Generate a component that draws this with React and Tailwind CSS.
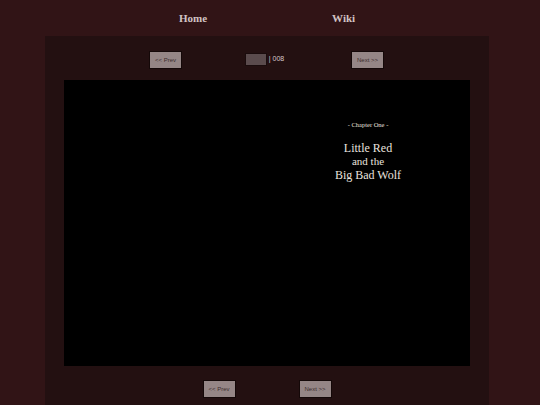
const serif = { fontFamily: '"Liberation Serif", "Times New Roman", serif' }

function PageButton({ children }) {
  return (
    <button
      className="w-[33px] h-[18px] flex items-center justify-center border border-[#140808] bg-[#958686] text-[#3b2c2c] text-[6px] leading-none"
      style={{ fontFamily: '"Liberation Sans", Arial, sans-serif' }}
    >
      {children}
    </button>
  )
}

export default function App() {
  return (
    <div className="w-[540px] h-[405px] overflow-hidden bg-[#311416] flex flex-col">
      <nav className="h-[36px] flex items-center text-[11px] font-bold text-[#d2c3c3]" style={serif}>
        <span className="ml-[179px]">Home</span>
        <span className="ml-[125px]">Wiki</span>
      </nav>

      <main className="mx-[45px] w-[444px] flex-1 bg-[#231011] flex flex-col">
        <div className="h-[44px] flex items-center justify-between pl-[104px] pr-[105px] pt-[3px]">
          <PageButton>&lt;&lt; Prev</PageButton>
          <div className="flex items-center gap-[2px] text-[7px] text-[#d6c9c9] -ml-[4px]" style={{ fontFamily: '"Liberation Sans", Arial, sans-serif' }}>
            <div className="w-[22px] h-[13px] bg-[#5a4b4d] border border-[#1a0c0d]" />
            <span>| 008</span>
          </div>
          <PageButton>Next &gt;&gt;</PageButton>
        </div>

        <div className="mx-[19px] h-[286px] bg-black flex">
          <div className="ml-[243px] w-[122px] pt-[42px] flex flex-col items-center text-[#e9e2df]" style={serif}>
            <p className="text-[6.5px] leading-none">- Chapter One -</p>
            <p className="mt-[13px] text-[12px] leading-[13px]">Little Red</p>
            <p className="text-[11px] leading-[13px]">and the</p>
            <p className="text-[12px] leading-[14px]">Big Bad Wolf</p>
          </div>
        </div>

        <div className="pt-[14px] flex justify-center gap-[63px]">
          <PageButton>&lt;&lt; Prev</PageButton>
          <PageButton>Next &gt;&gt;</PageButton>
        </div>
      </main>
    </div>
  )
}
